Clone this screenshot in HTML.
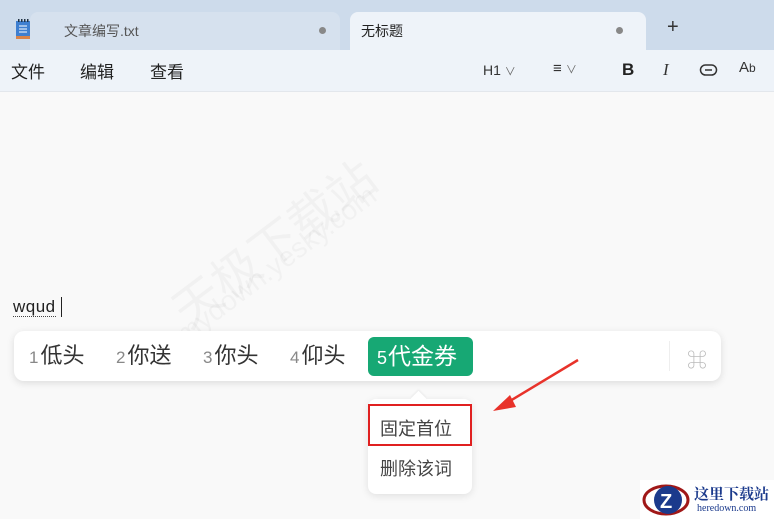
<!DOCTYPE html><html><head><meta charset="utf-8"><style>
body{margin:0;width:774px;height:519px;overflow:hidden;background:#f9f9f9;font-family:"Liberation Sans","Noto Sans CJK SC",sans-serif;position:relative}
.a{position:absolute}
.n{font-size:17px;color:#888;margin-right:2px}
</style></head><body>
<div class="a" style="left:0;top:0;width:774px;height:50px;background:#cddbeb"></div>
<div class="a" style="left:30px;top:12px;width:310px;height:38px;background:#d6e1ee;border-radius:8px 8px 0 0"></div>
<div class="a" style="left:350px;top:12px;width:296px;height:40px;background:#eef3f9;border-radius:8px 8px 0 0"></div>
<div class="a" style="left:0;top:50px;width:774px;height:41px;background:#eef3f9;border-bottom:1px solid #e3e7ec"></div>
<svg class="a" style="left:14px;top:19px" width="20" height="22"><rect x="2" y="2" width="14" height="16" fill="#3e7fd0"/><rect x="2" y="17" width="14" height="3" fill="#d8844a"/><g stroke="#fff" stroke-width="1"><line x1="5" y1="7" x2="13" y2="7"/><line x1="5" y1="10" x2="13" y2="10"/><line x1="5" y1="13" x2="13" y2="13"/></g><g fill="#234"><rect x="4" y="0" width="1.5" height="3"/><rect x="7" y="0" width="1.5" height="3"/><rect x="10" y="0" width="1.5" height="3"/><rect x="13" y="0" width="1.5" height="3"/></g></svg>
<div class="a" style="left:64px;top:21px;font-size:14px;color:#555">文章编写.txt</div>
<div class="a" style="left:319px;top:27px;width:7px;height:7px;border-radius:50%;background:#888"></div>
<div class="a" style="left:361px;top:21px;font-size:14px;color:#222">无标题</div>
<div class="a" style="left:616px;top:27px;width:7px;height:7px;border-radius:50%;background:#888"></div>
<div class="a" style="left:667px;top:16px;font-size:20px;color:#333">+</div>
<div class="a" style="left:11px;top:58px;font-size:17px;color:#222">文件</div>
<div class="a" style="left:80px;top:58px;font-size:17px;color:#222">编辑</div>
<div class="a" style="left:150px;top:58px;font-size:17px;color:#222">查看</div>
<div class="a" style="left:483px;top:62px;font-size:14px;color:#333">H1 <span style="font-size:11px;color:#666">&#8744;</span></div>
<div class="a" style="left:553px;top:60px;font-size:15px;color:#333">&#8801; <span style="font-size:11px;color:#666">&#8744;</span></div>
<div class="a" style="left:622px;top:60px;font-size:17px;font-weight:bold;color:#222">B</div>
<div class="a" style="left:663px;top:60px;font-size:17px;font-style:italic;color:#333;font-family:'Liberation Serif'">I</div>
<svg class="a" style="left:699px;top:63px" width="20" height="14"><rect x="1.5" y="2" width="16" height="10" rx="5" fill="none" stroke="#333" stroke-width="1.5"/><line x1="6" y1="7" x2="13" y2="7" stroke="#333" stroke-width="1.5"/></svg>
<div class="a" style="left:739px;top:59px;font-size:15px;color:#333">A<span style="font-size:12px">b</span></div>
<div class="a" style="left:155px;top:285px;font-size:48px;color:rgba(0,0,0,0.03);transform:rotate(-37deg);transform-origin:0 0;white-space:nowrap">天极下载站</div>
<div class="a" style="left:170px;top:325px;font-size:28px;color:rgba(0,0,0,0.03);transform:rotate(-37deg);transform-origin:0 0;white-space:nowrap">mydown.yesky.com</div>
<div class="a" style="left:13px;top:298px;font-size:17px;letter-spacing:0.5px;color:#222;border-bottom:1px dotted #444;line-height:18px">wqud</div>
<div class="a" style="left:61px;top:297px;width:1px;height:20px;background:#222"></div>
<div class="a" style="left:14px;top:331px;width:707px;height:50px;background:#fff;border-radius:10px;box-shadow:0 2px 8px rgba(0,0,0,0.12)"></div>
<div class="a" style="left:29px;top:342px;font-size:22px;color:#333;white-space:nowrap;line-height:28px"><span class="n">1</span>低头</div>
<div class="a" style="left:116px;top:342px;font-size:22px;color:#333;white-space:nowrap;line-height:28px"><span class="n">2</span>你送</div>
<div class="a" style="left:203px;top:342px;font-size:22px;color:#333;white-space:nowrap;line-height:28px"><span class="n">3</span>你头</div>
<div class="a" style="left:290px;top:342px;font-size:22px;color:#333;white-space:nowrap;line-height:28px"><span class="n">4</span>仰头</div>
<div class="a" style="left:368px;top:337px;width:105px;height:39px;background:#17a874;border-radius:6px"></div>
<div class="a" style="left:377px;top:342px;font-size:23px;color:#fff;line-height:28px;white-space:nowrap"><span style="font-size:18px;margin-right:1px">5</span>代金券</div>
<div class="a" style="left:669px;top:341px;width:1px;height:30px;background:#eee"></div>
<div class="a" style="left:687px;top:344px;font-size:20px;color:#bbb">&#8984;</div>
<div class="a" style="left:368px;top:399px;width:104px;height:95px;background:#fff;border-radius:8px;box-shadow:0 2px 8px rgba(0,0,0,0.1)"></div>
<div class="a" style="left:413px;top:393px;width:11px;height:11px;background:#fff;transform:rotate(45deg);box-shadow:-1px -1px 2px rgba(0,0,0,0.06)"></div>
<div class="a" style="left:405px;top:399px;width:26px;height:10px;background:#fff"></div>
<div class="a" style="left:368px;top:404px;width:104px;height:42px;border:2px solid #e02020;box-sizing:border-box"></div>
<div class="a" style="left:380px;top:415px;font-size:18px;color:#444">固定首位</div>
<div class="a" style="left:380px;top:455px;font-size:18px;color:#444">删除该词</div>
<svg class="a" style="left:490px;top:355px" width="95" height="60"><line x1="88" y1="5" x2="10" y2="52" stroke="#e8322a" stroke-width="2.5"/><polygon points="3,56 20,40 26,52" fill="#e8322a"/></svg>
<div class="a" style="left:640px;top:480px;width:134px;height:39px;background:#fff"></div>
<svg class="a" style="left:642px;top:481px" width="48" height="38"><ellipse cx="24" cy="19" rx="22" ry="14" fill="none" stroke="#a01818" stroke-width="3"/><circle cx="26" cy="19" r="14" fill="#1b3a8c"/><text x="18" y="27" font-size="20" font-weight="bold" fill="#fff" font-family="Liberation Sans">Z</text></svg>
<div class="a" style="left:694px;top:483px;font-size:15px;font-weight:bold;color:#1b3a8c;font-family:'Noto Serif CJK SC',serif">这里下载站</div>
<div class="a" style="left:697px;top:503px;font-size:10px;color:#1b3a8c;font-family:'Liberation Serif',serif">heredown.com</div>
</body></html>
